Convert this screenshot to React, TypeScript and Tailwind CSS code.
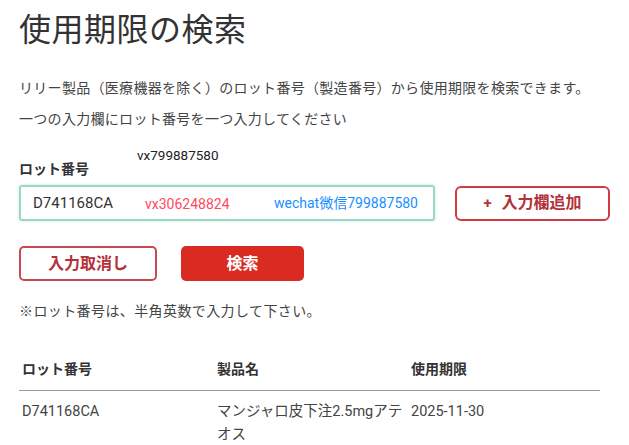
const font = { fontFamily: 'Roboto, "Noto Sans CJK JP", sans-serif' }

const App = () => {
    return (
        <div style={font} className="w-[629px] h-[445px] overflow-hidden bg-white px-[19px] pt-[10px] text-[#444]">
            <h1 className="text-[32px] leading-[40px] font-normal text-[#333] tracking-[0.5px]">使用期限の検索</h1>

            <p className="mt-[23px] text-[14px] leading-[31px] tracking-[0.3px]">リリー製品（医療機器を除く）のロット番号（製造番号）から使用期限を検索できます。</p>
            <p className="text-[14px] leading-[31px] tracking-[0.3px]">一つの入力欄にロット番号を一つ入力してください</p>

            <div className="relative mt-[24px]">
                <span className="absolute left-[118px] -top-[13px] text-[13.5px] leading-[18px] text-[#222]">vx799887580</span>
                <label className="block text-[14px] leading-[20px] font-bold text-[#333]">ロット番号</label>
            </div>

            <div className="mt-[6px] flex items-center gap-[20px]">
                <div className="relative w-[416px] h-[36px] rounded-[3px] border-2 border-[#9ad8c2] shadow-[0_0_3px_rgba(80,180,140,0.35)] flex items-center px-[12px]">
                    <span className="text-[15px] text-[#333]">D741168CA</span>
                    <span className="absolute left-[124px] top-[7px] text-[14px] leading-[20px] text-[#ff4a5e]">vx306248824</span>
                    <span className="absolute left-[253px] top-[6px] text-[14px] leading-[20px] text-[#1a8fff]">wechat微信799887580</span>
                </div>
                <button className="w-[155px] h-[35px] rounded-[6px] border-2 border-[#cf3a45] bg-white text-[#b3323a] font-bold text-[16px] flex items-center justify-center gap-[10px]">
                    <span className="text-[15px]">+</span>
                    <span>入力欄追加</span>
                </button>
            </div>

            <div className="mt-[25px] flex items-center gap-[24px]">
                <button className="w-[138px] h-[35px] rounded-[5px] border-2 border-[#c54a52] bg-white text-[#b3323a] font-bold text-[16px]">入力取消し</button>
                <button className="w-[123px] h-[35px] rounded-[5px] bg-[#d92b22] text-white font-bold text-[16px]">検索</button>
            </div>

            <p className="mt-[20px] text-[14px] leading-[20px] tracking-[0.4px]">※ロット番号は、半角英数で入力して下さい。</p>

            <table className="mt-[37px] w-[581px] text-left text-[14px] table-fixed">
                <thead>
                    <tr className="border-b border-[#999]">
                        <th className="w-[198px] pl-[3px] pb-[10px] font-bold text-[#333] leading-[22px]">ロット番号</th>
                        <th className="w-[194px] pb-[10px] font-bold text-[#333] leading-[22px]">製品名</th>
                        <th className="pb-[10px] font-bold text-[#333] leading-[22px]">使用期限</th>
                    </tr>
                </thead>
                <tbody>
                    <tr className="align-top">
                        <td className="pl-[3px] pt-[9px] leading-[23px] text-[14.5px]">D741168CA</td>
                        <td className="pt-[9px] pr-[4px] leading-[23px] text-[14.5px]">マンジャロ皮下注2.5mgアテオス</td>
                        <td className="pt-[9px] leading-[23px] text-[14.5px]">2025-11-30</td>
                    </tr>
                </tbody>
            </table>
        </div>
    )
}

export default App
